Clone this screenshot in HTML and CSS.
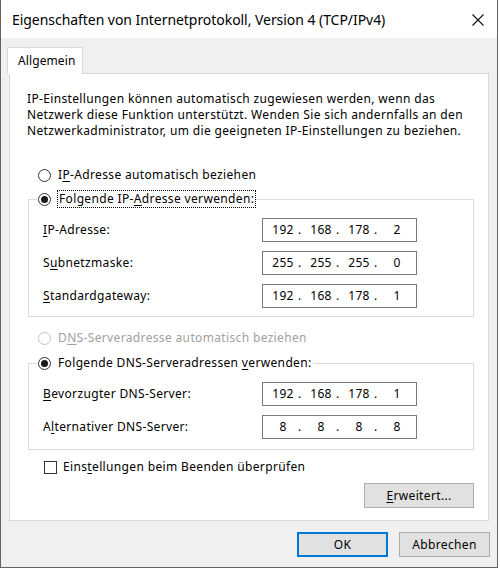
FILE: index.html
```html
<!DOCTYPE html>
<html lang="de">
<head>
<meta charset="utf-8">
<title>Eigenschaften von Internetprotokoll, Version 4 (TCP/IPv4)</title>
<link rel="stylesheet" href="styles.css">
</head>
<body>
<div class="window">
  <div class="titlebar">
    <span class="title">Eigenschaften von Internetprotokoll, Version 4 (TCP/IPv4)</span>
    <span class="close"><svg width="12" height="12" viewBox="0 0 12 12"><path d="M0.5 0.5L11.5 11.5M11.5 0.5L0.5 11.5" stroke="#111" stroke-width="1.1" fill="none"/></svg></span>
  </div>
  <div class="content">
    <div class="tab">Allgemein</div>
    <div class="panel">
      <p class="desc">IP-Einstellungen können automatisch zugewiesen werden, wenn das<br>Netzwerk diese Funktion unterstützt. Wenden Sie sich andernfalls an den<br>Netzwerkadministrator, um die geeigneten IP-Einstellungen zu beziehen.</p>

      <div class="radio-row first"><span class="radio"></span><span>I<u>P</u>-Adresse automatisch beziehen</span></div>

      <fieldset class="group group-ip">
        <legend><span class="radio-row"><span class="radio checked"></span><span class="focus">Folgende IP-<u>A</u>dresse verwenden:</span></span></legend>
        <div class="rows">
          <span class="label"><u>I</u>P-Adresse:</span>
          <div class="ip"><span class="oct">192</span><span class="dot">.</span><span class="oct">168</span><span class="dot">.</span><span class="oct">178</span><span class="dot">.</span><span class="oct">2</span></div>
          <span class="label">S<u>u</u>bnetzmaske:</span>
          <div class="ip"><span class="oct">255</span><span class="dot">.</span><span class="oct">255</span><span class="dot">.</span><span class="oct">255</span><span class="dot">.</span><span class="oct">0</span></div>
          <span class="label"><u>S</u>tandardgateway:</span>
          <div class="ip"><span class="oct">192</span><span class="dot">.</span><span class="oct">168</span><span class="dot">.</span><span class="oct">178</span><span class="dot">.</span><span class="oct">1</span></div>
        </div>
      </fieldset>

      <div class="radio-row dns-auto disabled"><span class="radio"></span><span>D<u>N</u>S-Serveradresse automatisch beziehen</span></div>

      <fieldset class="group group-dns">
        <legend><span class="radio-row"><span class="radio checked"></span><span>Folgende DNS-Serveradressen <u>v</u>erwenden:</span></span></legend>
        <div class="rows">
          <span class="label"><u>B</u>evorzugter DNS-Server:</span>
          <div class="ip"><span class="oct">192</span><span class="dot">.</span><span class="oct">168</span><span class="dot">.</span><span class="oct">178</span><span class="dot">.</span><span class="oct">1</span></div>
          <span class="label">A<u>l</u>ternativer DNS-Server:</span>
          <div class="ip"><span class="oct">8</span><span class="dot">.</span><span class="oct">8</span><span class="dot">.</span><span class="oct">8</span><span class="dot">.</span><span class="oct">8</span></div>
        </div>
      </fieldset>

      <div class="check-row"><span class="checkbox"></span><span>Eins<u>t</u>ellungen beim Beenden überprüfen</span></div>

      <button class="btn btn-adv" type="button"><u>E</u>rweitert...</button>
    </div>
    <div class="buttons">
      <button class="btn btn-ok" type="button">OK</button>
      <button class="btn" type="button">Abbrechen</button>
    </div>
  </div>
</div>
</body>
</html>
```

FILE: styles.css
```css
* { box-sizing: border-box; }
html, body { margin: 0; padding: 0; }
body {
  width: 500px;
  height: 569px;
  background: #ffffff;
  font-family: "Noto Sans", "Open Sans", sans-serif;
  font-size: 12px;
  letter-spacing: 0.35px;
  color: #000;
}
u { text-underline-offset: 2px; text-decoration-thickness: 1px; }

.window {
  width: 498px;
  height: 568px;
  background: #f0f0f0;
  border: 1px solid #5f6660;
  border-top: none;
  display: flex;
  flex-direction: column;
}

.titlebar {
  height: 38px;
  flex: none;
  background: #fff;
  display: flex;
  align-items: center;
  justify-content: space-between;
  padding: 2px 0 0 11px;
}
.title { font-size: 14px; line-height: 20px; letter-spacing: -0.05px; }
.close {
  width: 38px;
  height: 100%;
  display: flex;
  align-items: center;
  justify-content: center;
}

.content {
  flex: 1;
  padding-top: 9px;
  display: flex;
  flex-direction: column;
}

.tab {
  margin-left: 6px;
  width: 76px;
  height: 27px;
  margin-bottom: -1px;
  background: #fff;
  border: 1px solid #d9d9d9;
  border-bottom: none;
  padding: 4px 0 0 10px;
  line-height: 18px;
  letter-spacing: 0.1px;
  position: relative;
  z-index: 1;
}

.panel {
  margin-left: 8px;
  width: 480px;
  height: 448px;
  background: #fff;
  border: 1px solid #d9d9d9;
  padding-top: 17px;
  display: flex;
  flex-direction: column;
  align-items: flex-start;
}

.desc {
  margin: 0 0 0 17px;
  line-height: 16px;
}

.radio-row {
  display: flex;
  align-items: center;
  gap: 7px;
  line-height: 16px;
}
.radio-row.first { margin: 28px 0 0 28px; }
.radio-row.dns-auto { margin: 13px 0 0 28px; }
.disabled { color: #a0a0a0; }

.radio {
  width: 13px;
  height: 13px;
  flex: none;
  border: 1px solid #333;
  border-radius: 50%;
  background: #fff;
  display: flex;
  align-items: center;
  justify-content: center;
}
.radio.checked::after {
  content: "";
  width: 7px;
  height: 7px;
  border-radius: 50%;
  background: #1a1a1a;
}
.disabled .radio { border-color: #c4c4c4; }

.focus {
  outline: 1px dotted #000;
  padding: 0 1px;
}

.group {
  margin: 8px 0 0 18px;
  width: 446px;
  min-width: 0;
  border: 1px solid #dcdcdc;
  padding: 11px 0 8px 0;
}
.group-dns { margin-top: 9px; padding-bottom: 10px; }
.group legend {
  margin-left: 8px;
  padding: 0 1px;
  line-height: 16px;
}

.rows {
  display: grid;
  grid-template-columns: 219px 155px;
  row-gap: 9px;
  padding-left: 14px;
  align-items: center;
}
.label { line-height: 16px; }

.ip {
  height: 24px;
  border: 1px solid #7a7a7a;
  background: #fff;
  display: flex;
  align-items: center;
  padding-left: 5px;
  line-height: 16px;
}
.oct { width: 30px; text-align: center; }
.dot { width: 8px; text-align: left; }

.check-row {
  margin: 9px 0 0 34px;
  display: flex;
  align-items: center;
  gap: 6px;
  line-height: 16px;
}
.checkbox {
  width: 13px;
  height: 13px;
  border: 1px solid #333;
  background: #fff;
}

.btn {
  font-family: inherit;
  font-size: 12px;
  letter-spacing: 0.35px;
  color: #000;
  height: 25px;
  background: #e1e1e1;
  border: 1px solid #adadad;
  padding: 0;
  line-height: 16px;
}
.btn-adv {
  align-self: flex-end;
  margin: 8px 14px 0 0;
  width: 110px;
}

.buttons {
  display: flex;
  justify-content: flex-end;
  gap: 11px;
  padding: 11px 7px 0 0;
}
.buttons .btn { width: 91px; }
.btn-ok { border: 2px solid #0078d7; }
```
